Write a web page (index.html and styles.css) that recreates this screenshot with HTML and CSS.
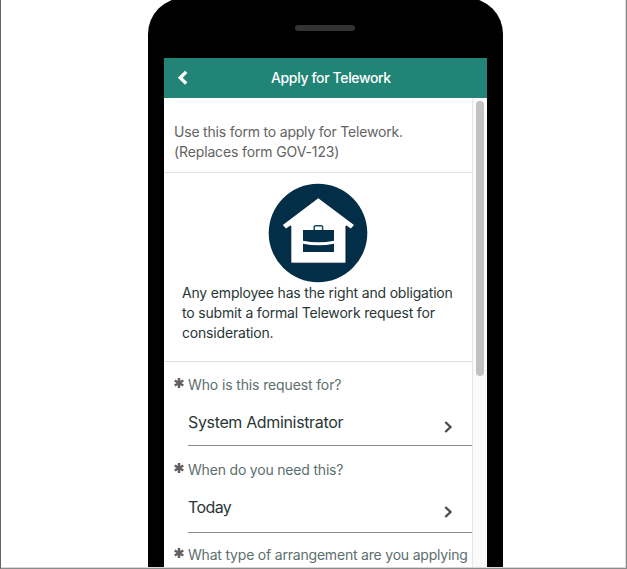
FILE: index.html
```
<!DOCTYPE html>
<html lang="en">
<head>
<meta charset="utf-8">
<title>Apply for Telework</title>
<link rel="stylesheet" href="styles.css">
</head>
<body>
<div class="stage">
  <div class="phone">
    <div class="speaker"></div>
    <div class="screen">
      <header class="bar">
        <svg class="back" width="12" height="16" viewBox="0 0 12 16"><path d="M9.200 1.900 3.200 7.700 9.200 13.500" fill="none" stroke="#fff" stroke-width="3.3"/></svg>
        <h1 class="title">Apply for Telework</h1>
      </header>
      <div class="body">
        <main class="form">
          <p class="intro"><span class="i1">Use this form to apply for Telework.</span><br><span class="i2">(Replaces form GOV-123)</span></p>
          <section class="info">
            <svg class="logo" width="100" height="100" viewBox="0 0 100 100">
              <circle cx="50" cy="50" r="49.3" fill="#022e47"/>
              <path d="M50.3 15.3 86 42l-3.2 3.600-4.800-3.400V80.2H22.800V42.200L18 45.600 14.800 42Z" fill="#fff"/>
              <path d="M22.800 43V80.200H78V43" fill="none" stroke="#011a33" stroke-width="1"/>
              <path d="M46.200 47.200V44q0-1.300 1.300-1.300h5.800q1.300 0 1.300 1.300v3.200" fill="none" stroke="#164b58" stroke-width="1.5"/>
              <path d="M35 47h31v10.700q-15.500 3.200-31 0ZM35 60.800q15.500 3 31 0V69H35Z" fill="#022e47"/>
            </svg>
            <p class="text">Any employee has the right and obligation<br>to submit a formal Telework request for<br>consideration.</p>
          </section>
          <div class="field">
            <div class="label"><svg class="star" width="10" height="10" viewBox="0 0 10 10"><path d="M5 0v10M.7 2.500l8.600 5M9.300 2.500l-8.600 5"/></svg><span class="l1">Who is this request for?</span></div>
            <div class="value"><span class="v1">System Administrator</span><svg class="next" width="9" height="12" viewBox="0 0 9 12"><path d="M1.300 1 6.500 6 1.300 11"/></svg></div>
          </div>
          <div class="field tall">
            <div class="label"><svg class="star" width="10" height="10" viewBox="0 0 10 10"><path d="M5 0v10M.7 2.500l8.600 5M9.300 2.500l-8.600 5"/></svg><span class="l2">When do you need this?</span></div>
            <div class="value"><span class="v2">Today</span><svg class="next" width="9" height="12" viewBox="0 0 9 12"><path d="M1.300 1 6.500 6 1.300 11"/></svg></div>
          </div>
          <div class="field last">
            <div class="label"><svg class="star" width="10" height="10" viewBox="0 0 10 10"><path d="M5 0v10M.7 2.500l8.600 5M9.300 2.500l-8.600 5"/></svg><span class="l3">What type of arrangement are you applying</span></div>
          </div>
        </main>
        <div class="track"><div class="thumb"></div></div>
      </div>
    </div>
  </div>
</div>
</body>
</html>
```

FILE: styles.css
```
* { box-sizing: border-box; }
body, h1, p { margin: 0; }
body {
  width: 627px;
  height: 569px;
  overflow: hidden;
  background: #fff;
  font: 14px/20px Inter, "Liberation Sans", sans-serif;
}
.stage {
  height: 569px;
  padding-left: 147px;
  overflow: hidden;
  border: 1px solid #8b8b8b;
  border-left-color: #666;
  border-top: 0;
  box-shadow: inset -1px -1px #d8d8d8;
}
.phone {
  width: 355px;
  height: 569px;
  margin-top: -2px;
  padding: 27px 16px 0;
  border-radius: 36px 36px 0 0;
  background: #000;
}
.speaker {
  width: 60px;
  height: 6px;
  margin: 0 auto 27px;
  position: relative;
  left: -1px;
  border-radius: 3px;
  background: #333;
}
.screen { width: 323px; height: 509px; background: #fff; }
.bar {
  height: 40px;
  display: flex;
  align-items: center;
  background: #218476;
  color: #fff;
}
.back { margin-left: 13px; }
.title {
  margin-left: 82px;
  font-size: 14px;
  font-weight: 500;
  white-space: nowrap;
  letter-spacing: -.36px;
}
.body { display: flex; height: 469px; }
.form { width: 308px; overflow: hidden; white-space: nowrap; }
.intro {
  height: 75px;
  padding: 24px 10px 0;
  border-bottom: 1px solid #dce5e4;
  color: #636363;
}
.i1 { letter-spacing: -.2px; }
.i2 { letter-spacing: -.13px; }
.info {
  height: 189px;
  padding: 10px 18px 0;
  border-bottom: 1px solid #dedede;
  color: #293636;
}
.text { letter-spacing: -.18px; }
.logo { display: block; margin-left: 86px; }
.field { height: 84px; padding: 13px 0 0 10px; }
.tall { height: 87px; padding-top: 14px; }
.last { padding-top: 12px; }
.label { display: flex; color: #5c6f6e; }
.l1 { letter-spacing: -.13px; }
.l2 { letter-spacing: -.19px; }
.l3 { letter-spacing: -.2px; }
.star {
  margin: 3px 4px 0 0;
  flex: none;
  stroke: #606060;
  stroke-width: 2.5;
}
.value {
  display: flex;
  justify-content: space-between;
  height: 51px;
  margin-left: 14px;
  padding: 17px 19px 0 0;
  border-bottom: 1px solid #8b8b8b;
  color: #293636;
  font-size: 16px;
}
.v1 { letter-spacing: -.35px; }
.v2 { letter-spacing: -.6px; }
.tall .value { height: 53px; }
.next {
  margin-top: 9px;
  fill: none;
  stroke: #4b4b4b;
  stroke-width: 2.300;
}
.track { width: 15px; padding: 3px 3px; border-left: 1px solid #e5e5e5; background: #fafafa; }
.thumb { width: 8px; height: 275px; border-radius: 4px; background: #c1c1c1; }
```
